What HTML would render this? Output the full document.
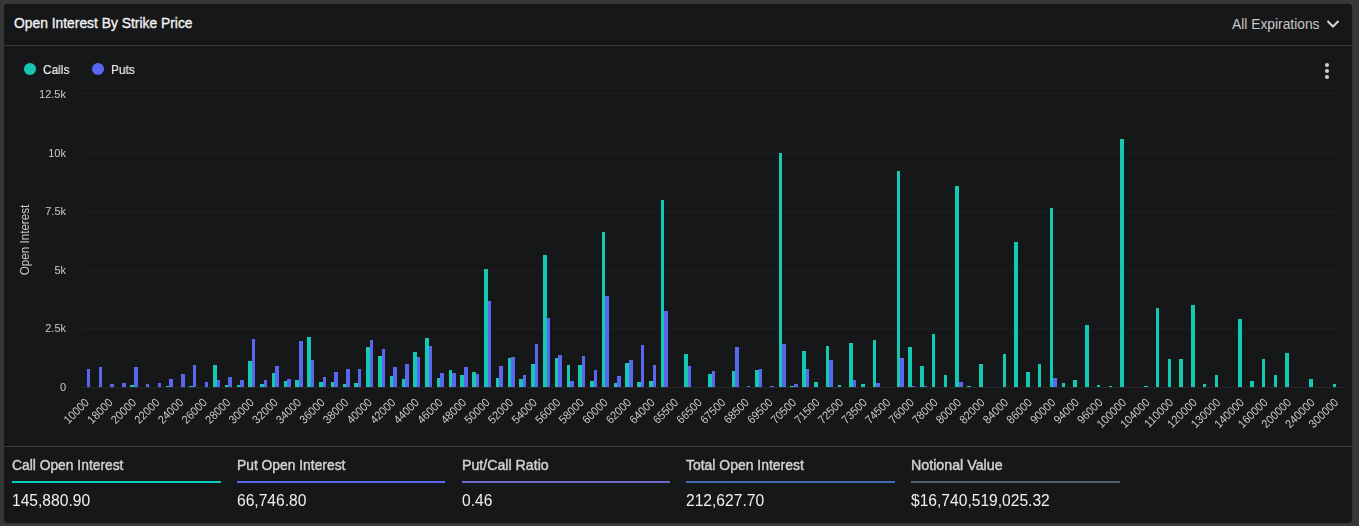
<!DOCTYPE html>
<html><head><meta charset="utf-8">
<style>
html,body{margin:0;padding:0;}
body{width:1359px;height:526px;background:#37383a;position:relative;overflow:hidden;font-family:"Liberation Sans",sans-serif;}
.card{position:absolute;left:4px;top:4px;width:1348px;height:518.5px;background:#161719;border-radius:4px;box-shadow:0 0 1px rgba(0,0,0,0.6);}
.a{position:absolute;white-space:nowrap;line-height:1;}
.title{left:14px;top:15.1px;font-size:15px;color:#f2f2f2;-webkit-text-stroke:0.35px #f2f2f2;transform:scaleX(0.923);transform-origin:0 0;}
.hsep{position:absolute;left:4px;top:45px;width:1348px;height:1px;background:#38393b;}
.exp{left:1232px;top:15.6px;font-size:15px;color:#c8c8c8;transform:scaleX(0.921);transform-origin:0 0;}
.leg{top:63px;font-size:13px;color:#ececec;will-change:transform;-webkit-text-stroke:0.2px #ececec;transform:scaleX(0.91);transform-origin:0 0;}
.dot{position:absolute;width:12px;height:12px;border-radius:50%;top:63px;}
svg.ch{position:absolute;left:0;top:0;will-change:transform;}
.yl{font-size:11px;fill:#c8c9cc;font-family:"Liberation Sans",sans-serif;}
.xl{font-size:11.8px;fill:#c8c9cc;font-family:"Liberation Sans",sans-serif;}
.yt{font-size:12.4px;fill:#c8c9cc;font-family:"Liberation Sans",sans-serif;}
.fsep{position:absolute;left:4px;top:446px;width:1348px;height:1px;background:#3a3b3d;}
.st{position:absolute;top:455px;width:208.5px;height:60px;}
.sl{position:absolute;left:0;top:2px;font-size:15px;transform:scaleX(0.925);transform-origin:0 0;color:#d2d2d2;-webkit-text-stroke:0.45px #d2d2d2;white-space:nowrap;line-height:1;}
.sb{position:absolute;left:0;top:26px;width:208.5px;height:2px;}
.sv{position:absolute;left:0;top:38px;font-size:16px;transform:scaleX(0.975);transform-origin:0 0;color:#f0f0f0;white-space:nowrap;line-height:1;}
</style></head><body>
<div class="card"></div>
<div class="a title">Open Interest By Strike Price</div>
<div class="a exp">All Expirations</div>
<svg style="position:absolute;left:1325px;top:18px" width="16" height="12" viewBox="0 0 16 12"><path d="M2.5 3 L8 8.5 L13.5 3" fill="none" stroke="#d8d8d8" stroke-width="2"/></svg>
<div class="hsep"></div>
<div class="dot" style="left:24px;background:#16c7b2"></div>
<div class="a leg" style="left:43px">Calls</div>
<div class="dot" style="left:92px;background:#5866f0"></div>
<div class="a leg" style="left:111px">Puts</div>
<svg style="position:absolute;left:1320px;top:61px" width="14" height="20" viewBox="0 0 14 20"><circle cx="7" cy="4" r="2" fill="#d0d0d0"/><circle cx="7" cy="10" r="2" fill="#d0d0d0"/><circle cx="7" cy="16" r="2" fill="#d0d0d0"/></svg>
<svg class="ch" width="1359" height="526" viewBox="0 0 1359 526" shape-rendering="crispEdges">
<rect x="81" y="93" width="1261" height="1" fill="#1d1e21"/>
<rect x="81" y="153" width="1261" height="1" fill="#1d1e21"/>
<rect x="81" y="211" width="1261" height="1" fill="#1d1e21"/>
<rect x="81" y="270" width="1261" height="1" fill="#1d1e21"/>
<rect x="81" y="328" width="1261" height="1" fill="#1d1e21"/>
<rect x="81" y="387" width="1261" height="1" fill="#29292a"/>
<rect x="87" y="369" width="3" height="18" fill="#5866f0"/>
<rect x="99" y="367" width="3" height="20" fill="#5866f0"/>
<rect x="110" y="384" width="4" height="3" fill="#5866f0"/>
<rect x="122" y="383" width="4" height="4" fill="#5866f0"/>
<rect x="130" y="385" width="4" height="2" fill="#16c7b2"/>
<rect x="134" y="367" width="4" height="20" fill="#5866f0"/>
<rect x="146" y="384" width="3" height="3" fill="#5866f0"/>
<rect x="158" y="383" width="3" height="4" fill="#5866f0"/>
<rect x="166" y="386" width="3" height="1" fill="#16c7b2"/>
<rect x="169" y="379" width="4" height="8" fill="#5866f0"/>
<rect x="181" y="374" width="4" height="13" fill="#5866f0"/>
<rect x="189" y="386" width="4" height="1" fill="#16c7b2"/>
<rect x="193" y="365" width="3" height="22" fill="#5866f0"/>
<rect x="205" y="382" width="3" height="5" fill="#5866f0"/>
<rect x="213" y="365" width="4" height="22" fill="#16c7b2"/>
<rect x="217" y="380" width="3" height="7" fill="#5866f0"/>
<rect x="225" y="385" width="3" height="2" fill="#16c7b2"/>
<rect x="228" y="377" width="4" height="10" fill="#5866f0"/>
<rect x="237" y="385" width="3" height="2" fill="#16c7b2"/>
<rect x="240" y="380" width="4" height="7" fill="#5866f0"/>
<rect x="248" y="361" width="4" height="26" fill="#16c7b2"/>
<rect x="252" y="339" width="3" height="48" fill="#5866f0"/>
<rect x="260" y="384" width="4" height="3" fill="#16c7b2"/>
<rect x="264" y="380" width="3" height="7" fill="#5866f0"/>
<rect x="272" y="373" width="3" height="14" fill="#16c7b2"/>
<rect x="275" y="366" width="4" height="21" fill="#5866f0"/>
<rect x="284" y="381" width="3" height="6" fill="#16c7b2"/>
<rect x="287" y="379" width="4" height="8" fill="#5866f0"/>
<rect x="295" y="380" width="4" height="7" fill="#16c7b2"/>
<rect x="299" y="341" width="4" height="46" fill="#5866f0"/>
<rect x="307" y="337" width="4" height="50" fill="#16c7b2"/>
<rect x="311" y="360" width="3" height="27" fill="#5866f0"/>
<rect x="319" y="382" width="4" height="5" fill="#16c7b2"/>
<rect x="323" y="377" width="3" height="10" fill="#5866f0"/>
<rect x="331" y="382" width="3" height="5" fill="#16c7b2"/>
<rect x="334" y="372" width="4" height="15" fill="#5866f0"/>
<rect x="343" y="384" width="3" height="3" fill="#16c7b2"/>
<rect x="346" y="369" width="4" height="18" fill="#5866f0"/>
<rect x="354" y="383" width="4" height="4" fill="#16c7b2"/>
<rect x="358" y="369" width="3" height="18" fill="#5866f0"/>
<rect x="366" y="347" width="4" height="40" fill="#16c7b2"/>
<rect x="370" y="340" width="3" height="47" fill="#5866f0"/>
<rect x="378" y="356" width="4" height="31" fill="#16c7b2"/>
<rect x="382" y="349" width="3" height="38" fill="#5866f0"/>
<rect x="390" y="376" width="3" height="11" fill="#16c7b2"/>
<rect x="393" y="367" width="4" height="20" fill="#5866f0"/>
<rect x="402" y="379" width="3" height="8" fill="#16c7b2"/>
<rect x="405" y="364" width="4" height="23" fill="#5866f0"/>
<rect x="413" y="352" width="4" height="35" fill="#16c7b2"/>
<rect x="417" y="357" width="3" height="30" fill="#5866f0"/>
<rect x="425" y="338" width="4" height="49" fill="#16c7b2"/>
<rect x="429" y="346" width="3" height="41" fill="#5866f0"/>
<rect x="437" y="378" width="3" height="9" fill="#16c7b2"/>
<rect x="440" y="373" width="4" height="14" fill="#5866f0"/>
<rect x="449" y="370" width="3" height="17" fill="#16c7b2"/>
<rect x="452" y="373" width="4" height="14" fill="#5866f0"/>
<rect x="460" y="375" width="4" height="12" fill="#16c7b2"/>
<rect x="464" y="367" width="4" height="20" fill="#5866f0"/>
<rect x="472" y="372" width="4" height="15" fill="#16c7b2"/>
<rect x="476" y="374" width="3" height="13" fill="#5866f0"/>
<rect x="484" y="269" width="4" height="118" fill="#16c7b2"/>
<rect x="488" y="301" width="3" height="86" fill="#5866f0"/>
<rect x="496" y="378" width="3" height="9" fill="#16c7b2"/>
<rect x="499" y="366" width="4" height="21" fill="#5866f0"/>
<rect x="508" y="358" width="3" height="29" fill="#16c7b2"/>
<rect x="511" y="357" width="4" height="30" fill="#5866f0"/>
<rect x="519" y="379" width="4" height="8" fill="#16c7b2"/>
<rect x="523" y="375" width="3" height="12" fill="#5866f0"/>
<rect x="531" y="364" width="4" height="23" fill="#16c7b2"/>
<rect x="535" y="344" width="3" height="43" fill="#5866f0"/>
<rect x="543" y="255" width="4" height="132" fill="#16c7b2"/>
<rect x="547" y="318" width="3" height="69" fill="#5866f0"/>
<rect x="555" y="358" width="3" height="29" fill="#16c7b2"/>
<rect x="558" y="355" width="4" height="32" fill="#5866f0"/>
<rect x="567" y="365" width="3" height="22" fill="#16c7b2"/>
<rect x="570" y="381" width="4" height="6" fill="#5866f0"/>
<rect x="578" y="365" width="4" height="22" fill="#16c7b2"/>
<rect x="582" y="356" width="3" height="31" fill="#5866f0"/>
<rect x="590" y="381" width="4" height="6" fill="#16c7b2"/>
<rect x="594" y="370" width="3" height="17" fill="#5866f0"/>
<rect x="602" y="232" width="3" height="155" fill="#16c7b2"/>
<rect x="605" y="296" width="4" height="91" fill="#5866f0"/>
<rect x="614" y="383" width="3" height="4" fill="#16c7b2"/>
<rect x="617" y="376" width="4" height="11" fill="#5866f0"/>
<rect x="625" y="363" width="4" height="24" fill="#16c7b2"/>
<rect x="629" y="360" width="4" height="27" fill="#5866f0"/>
<rect x="637" y="382" width="4" height="5" fill="#16c7b2"/>
<rect x="641" y="345" width="3" height="42" fill="#5866f0"/>
<rect x="649" y="381" width="4" height="6" fill="#16c7b2"/>
<rect x="653" y="365" width="3" height="22" fill="#5866f0"/>
<rect x="661" y="200" width="3" height="187" fill="#16c7b2"/>
<rect x="664" y="311" width="4" height="76" fill="#5866f0"/>
<rect x="684" y="354" width="4" height="33" fill="#16c7b2"/>
<rect x="688" y="366" width="3" height="21" fill="#5866f0"/>
<rect x="708" y="374" width="4" height="13" fill="#16c7b2"/>
<rect x="712" y="371" width="3" height="16" fill="#5866f0"/>
<rect x="732" y="371" width="3" height="16" fill="#16c7b2"/>
<rect x="735" y="347" width="4" height="40" fill="#5866f0"/>
<rect x="747" y="386" width="3" height="1" fill="#5866f0"/>
<rect x="755" y="370" width="4" height="17" fill="#16c7b2"/>
<rect x="759" y="369" width="3" height="18" fill="#5866f0"/>
<rect x="770" y="386" width="4" height="1" fill="#5866f0"/>
<rect x="779" y="153" width="3" height="234" fill="#16c7b2"/>
<rect x="782" y="344" width="4" height="43" fill="#5866f0"/>
<rect x="790" y="386" width="4" height="1" fill="#16c7b2"/>
<rect x="794" y="384" width="4" height="3" fill="#5866f0"/>
<rect x="802" y="351" width="4" height="36" fill="#16c7b2"/>
<rect x="806" y="369" width="3" height="18" fill="#5866f0"/>
<rect x="814" y="382" width="4" height="5" fill="#16c7b2"/>
<rect x="826" y="346" width="3" height="41" fill="#16c7b2"/>
<rect x="829" y="360" width="4" height="27" fill="#5866f0"/>
<rect x="838" y="385" width="3" height="2" fill="#16c7b2"/>
<rect x="849" y="343" width="4" height="44" fill="#16c7b2"/>
<rect x="853" y="380" width="3" height="7" fill="#5866f0"/>
<rect x="861" y="384" width="4" height="3" fill="#16c7b2"/>
<rect x="873" y="340" width="3" height="47" fill="#16c7b2"/>
<rect x="876" y="383" width="4" height="4" fill="#5866f0"/>
<rect x="897" y="171" width="3" height="216" fill="#16c7b2"/>
<rect x="900" y="358" width="4" height="29" fill="#5866f0"/>
<rect x="908" y="347" width="4" height="40" fill="#16c7b2"/>
<rect x="912" y="386" width="3" height="1" fill="#5866f0"/>
<rect x="920" y="366" width="4" height="21" fill="#16c7b2"/>
<rect x="924" y="386" width="3" height="1" fill="#5866f0"/>
<rect x="932" y="334" width="3" height="53" fill="#16c7b2"/>
<rect x="944" y="375" width="3" height="12" fill="#16c7b2"/>
<rect x="955" y="186" width="4" height="201" fill="#16c7b2"/>
<rect x="959" y="382" width="4" height="5" fill="#5866f0"/>
<rect x="967" y="386" width="4" height="1" fill="#16c7b2"/>
<rect x="979" y="364" width="4" height="23" fill="#16c7b2"/>
<rect x="1003" y="354" width="3" height="33" fill="#16c7b2"/>
<rect x="1014" y="242" width="4" height="145" fill="#16c7b2"/>
<rect x="1026" y="372" width="4" height="15" fill="#16c7b2"/>
<rect x="1038" y="364" width="3" height="23" fill="#16c7b2"/>
<rect x="1050" y="208" width="3" height="179" fill="#16c7b2"/>
<rect x="1053" y="378" width="4" height="9" fill="#5866f0"/>
<rect x="1062" y="383" width="3" height="4" fill="#16c7b2"/>
<rect x="1073" y="380" width="4" height="7" fill="#16c7b2"/>
<rect x="1085" y="325" width="4" height="62" fill="#16c7b2"/>
<rect x="1097" y="385" width="3" height="2" fill="#16c7b2"/>
<rect x="1109" y="386" width="3" height="1" fill="#16c7b2"/>
<rect x="1120" y="139" width="4" height="248" fill="#16c7b2"/>
<rect x="1144" y="386" width="4" height="1" fill="#16c7b2"/>
<rect x="1156" y="308" width="3" height="79" fill="#16c7b2"/>
<rect x="1168" y="359" width="3" height="28" fill="#16c7b2"/>
<rect x="1179" y="359" width="4" height="28" fill="#16c7b2"/>
<rect x="1191" y="305" width="4" height="82" fill="#16c7b2"/>
<rect x="1203" y="384" width="3" height="3" fill="#16c7b2"/>
<rect x="1215" y="375" width="3" height="12" fill="#16c7b2"/>
<rect x="1238" y="319" width="4" height="68" fill="#16c7b2"/>
<rect x="1250" y="381" width="4" height="6" fill="#16c7b2"/>
<rect x="1262" y="359" width="3" height="28" fill="#16c7b2"/>
<rect x="1274" y="375" width="3" height="12" fill="#16c7b2"/>
<rect x="1285" y="353" width="4" height="34" fill="#16c7b2"/>
<rect x="1309" y="379" width="4" height="8" fill="#16c7b2"/>
<rect x="1333" y="384" width="3" height="3" fill="#16c7b2"/>
<text x="66" y="98" text-anchor="end" class="yl">12.5k</text>
<text x="66" y="156.6" text-anchor="end" class="yl">10k</text>
<text x="66" y="215.2" text-anchor="end" class="yl">7.5k</text>
<text x="66" y="273.8" text-anchor="end" class="yl">5k</text>
<text x="66" y="332.4" text-anchor="end" class="yl">2.5k</text>
<text x="66" y="391" text-anchor="end" class="yl">0</text>
<text transform="translate(89.89,403.2) rotate(-45) scale(0.92,1)" text-anchor="end" class="xl">10000</text>
<text transform="translate(113.46,403.2) rotate(-45) scale(0.92,1)" text-anchor="end" class="xl">18000</text>
<text transform="translate(137.03,403.2) rotate(-45) scale(0.92,1)" text-anchor="end" class="xl">20000</text>
<text transform="translate(160.6,403.2) rotate(-45) scale(0.92,1)" text-anchor="end" class="xl">22000</text>
<text transform="translate(184.17,403.2) rotate(-45) scale(0.92,1)" text-anchor="end" class="xl">24000</text>
<text transform="translate(207.74,403.2) rotate(-45) scale(0.92,1)" text-anchor="end" class="xl">26000</text>
<text transform="translate(231.31,403.2) rotate(-45) scale(0.92,1)" text-anchor="end" class="xl">28000</text>
<text transform="translate(254.88,403.2) rotate(-45) scale(0.92,1)" text-anchor="end" class="xl">30000</text>
<text transform="translate(278.45,403.2) rotate(-45) scale(0.92,1)" text-anchor="end" class="xl">32000</text>
<text transform="translate(302.02,403.2) rotate(-45) scale(0.92,1)" text-anchor="end" class="xl">34000</text>
<text transform="translate(325.59,403.2) rotate(-45) scale(0.92,1)" text-anchor="end" class="xl">36000</text>
<text transform="translate(349.16,403.2) rotate(-45) scale(0.92,1)" text-anchor="end" class="xl">38000</text>
<text transform="translate(372.73,403.2) rotate(-45) scale(0.92,1)" text-anchor="end" class="xl">40000</text>
<text transform="translate(396.3,403.2) rotate(-45) scale(0.92,1)" text-anchor="end" class="xl">42000</text>
<text transform="translate(419.87,403.2) rotate(-45) scale(0.92,1)" text-anchor="end" class="xl">44000</text>
<text transform="translate(443.44,403.2) rotate(-45) scale(0.92,1)" text-anchor="end" class="xl">46000</text>
<text transform="translate(467.01,403.2) rotate(-45) scale(0.92,1)" text-anchor="end" class="xl">48000</text>
<text transform="translate(490.58,403.2) rotate(-45) scale(0.92,1)" text-anchor="end" class="xl">50000</text>
<text transform="translate(514.15,403.2) rotate(-45) scale(0.92,1)" text-anchor="end" class="xl">52000</text>
<text transform="translate(537.72,403.2) rotate(-45) scale(0.92,1)" text-anchor="end" class="xl">54000</text>
<text transform="translate(561.29,403.2) rotate(-45) scale(0.92,1)" text-anchor="end" class="xl">56000</text>
<text transform="translate(584.86,403.2) rotate(-45) scale(0.92,1)" text-anchor="end" class="xl">58000</text>
<text transform="translate(608.43,403.2) rotate(-45) scale(0.92,1)" text-anchor="end" class="xl">60000</text>
<text transform="translate(632,403.2) rotate(-45) scale(0.92,1)" text-anchor="end" class="xl">62000</text>
<text transform="translate(655.57,403.2) rotate(-45) scale(0.92,1)" text-anchor="end" class="xl">64000</text>
<text transform="translate(679.14,403.2) rotate(-45) scale(0.92,1)" text-anchor="end" class="xl">65500</text>
<text transform="translate(702.71,403.2) rotate(-45) scale(0.92,1)" text-anchor="end" class="xl">66500</text>
<text transform="translate(726.29,403.2) rotate(-45) scale(0.92,1)" text-anchor="end" class="xl">67500</text>
<text transform="translate(749.86,403.2) rotate(-45) scale(0.92,1)" text-anchor="end" class="xl">68500</text>
<text transform="translate(773.43,403.2) rotate(-45) scale(0.92,1)" text-anchor="end" class="xl">69500</text>
<text transform="translate(797,403.2) rotate(-45) scale(0.92,1)" text-anchor="end" class="xl">70500</text>
<text transform="translate(820.57,403.2) rotate(-45) scale(0.92,1)" text-anchor="end" class="xl">71500</text>
<text transform="translate(844.14,403.2) rotate(-45) scale(0.92,1)" text-anchor="end" class="xl">72500</text>
<text transform="translate(867.71,403.2) rotate(-45) scale(0.92,1)" text-anchor="end" class="xl">73500</text>
<text transform="translate(891.28,403.2) rotate(-45) scale(0.92,1)" text-anchor="end" class="xl">74500</text>
<text transform="translate(914.85,403.2) rotate(-45) scale(0.92,1)" text-anchor="end" class="xl">76000</text>
<text transform="translate(938.42,403.2) rotate(-45) scale(0.92,1)" text-anchor="end" class="xl">78000</text>
<text transform="translate(961.99,403.2) rotate(-45) scale(0.92,1)" text-anchor="end" class="xl">80000</text>
<text transform="translate(985.56,403.2) rotate(-45) scale(0.92,1)" text-anchor="end" class="xl">82000</text>
<text transform="translate(1009.13,403.2) rotate(-45) scale(0.92,1)" text-anchor="end" class="xl">84000</text>
<text transform="translate(1032.7,403.2) rotate(-45) scale(0.92,1)" text-anchor="end" class="xl">86000</text>
<text transform="translate(1056.27,403.2) rotate(-45) scale(0.92,1)" text-anchor="end" class="xl">90000</text>
<text transform="translate(1079.84,403.2) rotate(-45) scale(0.92,1)" text-anchor="end" class="xl">94000</text>
<text transform="translate(1103.41,403.2) rotate(-45) scale(0.92,1)" text-anchor="end" class="xl">96000</text>
<text transform="translate(1126.98,403.2) rotate(-45) scale(0.92,1)" text-anchor="end" class="xl">100000</text>
<text transform="translate(1150.55,403.2) rotate(-45) scale(0.92,1)" text-anchor="end" class="xl">104000</text>
<text transform="translate(1174.12,403.2) rotate(-45) scale(0.92,1)" text-anchor="end" class="xl">110000</text>
<text transform="translate(1197.69,403.2) rotate(-45) scale(0.92,1)" text-anchor="end" class="xl">120000</text>
<text transform="translate(1221.26,403.2) rotate(-45) scale(0.92,1)" text-anchor="end" class="xl">130000</text>
<text transform="translate(1244.83,403.2) rotate(-45) scale(0.92,1)" text-anchor="end" class="xl">140000</text>
<text transform="translate(1268.4,403.2) rotate(-45) scale(0.92,1)" text-anchor="end" class="xl">160000</text>
<text transform="translate(1291.97,403.2) rotate(-45) scale(0.92,1)" text-anchor="end" class="xl">200000</text>
<text transform="translate(1315.54,403.2) rotate(-45) scale(0.92,1)" text-anchor="end" class="xl">240000</text>
<text transform="translate(1339.11,403.2) rotate(-45) scale(0.92,1)" text-anchor="end" class="xl">300000</text>
<text transform="translate(28.8,240) rotate(-90) scale(0.94,1)" text-anchor="middle" class="yt">Open Interest</text>
</svg>
<div class="fsep"></div>
<div class="st" style="left:12px"><div class="sl" style="transform:scaleX(0.922)">Call Open Interest</div><div class="sb" style="background:#00d0c0"></div><div class="sv">145,880.90</div></div>
<div class="st" style="left:236.75px"><div class="sl" style="transform:scaleX(0.922)">Put Open Interest</div><div class="sb" style="background:#5a68f0"></div><div class="sv">66,746.80</div></div>
<div class="st" style="left:461.5px"><div class="sl" style="transform:scaleX(0.945)">Put/Call Ratio</div><div class="sb" style="background:#7068c8"></div><div class="sv">0.46</div></div>
<div class="st" style="left:686.25px"><div class="sl" style="transform:scaleX(0.93)">Total Open Interest</div><div class="sb" style="background:#3c6ab0"></div><div class="sv">212,627.70</div></div>
<div class="st" style="left:911px"><div class="sl" style="transform:scaleX(0.95)">Notional Value</div><div class="sb" style="background:#505e70"></div><div class="sv">$16,740,519,025.32</div></div>
</body></html>
